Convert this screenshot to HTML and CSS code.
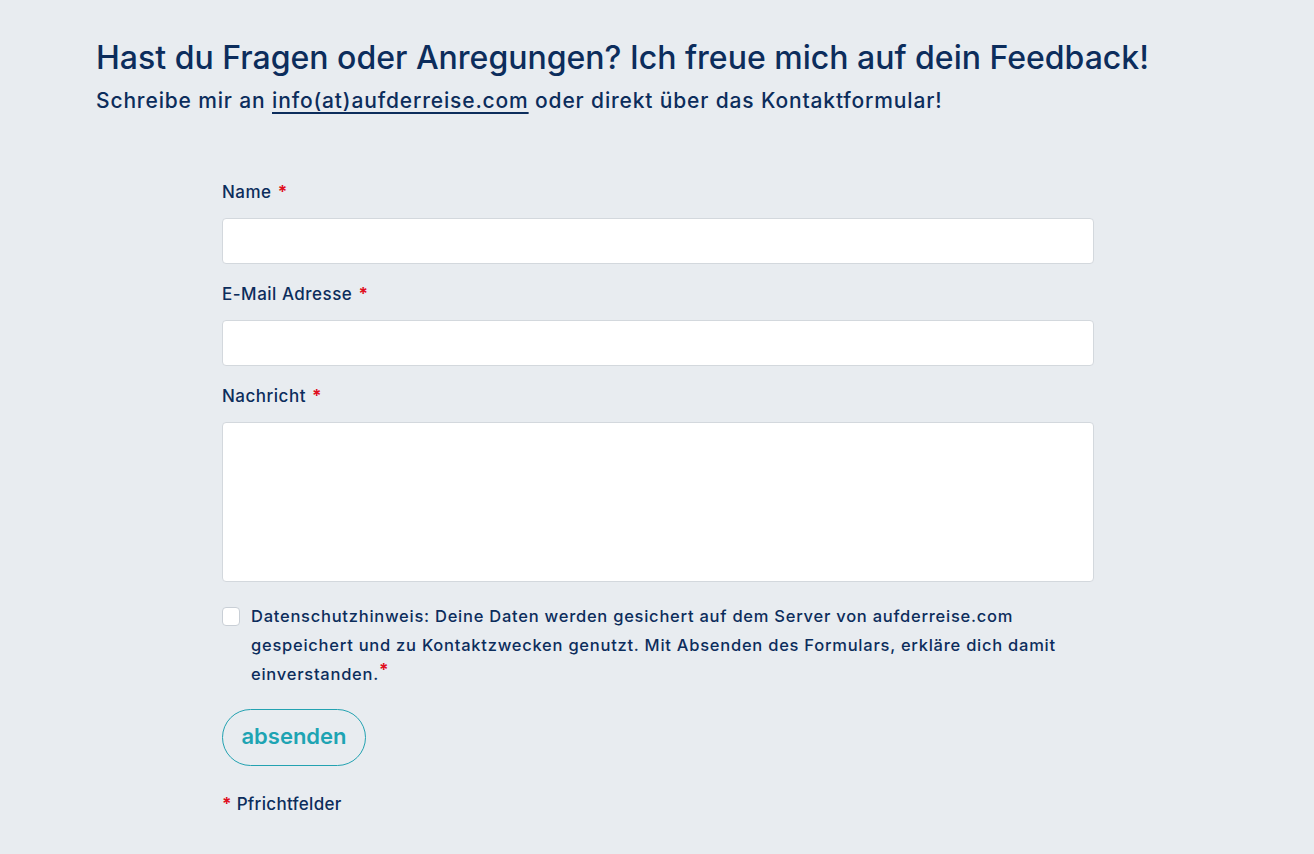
FILE: index.html
```html
<!DOCTYPE html>
<html lang="de">
<head>
<meta charset="utf-8">
<title>Kontakt</title>
<link rel="stylesheet" href="styles.css">
</head>
<body>
<main class="page">
  <header class="intro">
    <h1 class="title">Hast du Fragen oder Anregungen? Ich freue mich auf dein Feedback!</h1>
    <p class="subtitle">Schreibe mir an <a class="mail" href="#">info(at)aufderreise.com</a> oder direkt über das Kontaktformular!</p>
  </header>
  <form class="form">
    <div class="field">
      <label class="label">Name <span class="req">*</span></label>
      <input class="input" type="text">
    </div>
    <div class="field">
      <label class="label">E-Mail Adresse <span class="req">*</span></label>
      <input class="input" type="email">
    </div>
    <div class="field">
      <label class="label">Nachricht <span class="req">*</span></label>
      <textarea class="textarea"></textarea>
    </div>
    <div class="consent">
      <span class="box"></span>
      <p class="consent-text">Datenschutzhinweis: Deine Daten werden gesichert auf dem Server von aufderreise.com<br>gespeichert und zu Kontaktzwecken genutzt. Mit Absenden des Formulars, erkläre dich damit<br>einverstanden.<span class="req sup">*</span></p>
    </div>
    <button class="send" type="button">absenden</button>
    <p class="note"><span class="req">*</span> Pfrichtfelder</p>
  </form>
</main>
</body>
</html>
```

FILE: styles.css
```css
html, body {
  margin: 0;
  padding: 0;
}
body {
  background: #e8ecf0;
  color: #0c2d5c;
  font-family: "Inter", "Lato", sans-serif;
  width: 1314px;
  height: 854px;
  overflow: hidden;
}
.page {
  padding: 36px 0 0 96px;
}
.title {
  margin: 0;
  font-size: 32px;
  font-weight: 500;
  line-height: 44px;
  letter-spacing: 0;
}
.subtitle {
  margin: 6px 0 0;
  font-size: 21px;
  font-weight: 500;
  line-height: 30px;
  letter-spacing: 0.85px;
}
.mail {
  color: inherit;
  text-decoration: underline;
  text-underline-offset: 4px;
  text-decoration-thickness: 1.5px;
}
.form {
  margin: 64px 0 0 126px;
  width: 872px;
  display: flex;
  flex-direction: column;
}
.field {
  display: flex;
  flex-direction: column;
  margin-bottom: 18px;
}
.label {
  font-size: 17px;
  font-weight: 500;
  line-height: 24px;
  letter-spacing: 0.5px;
  margin-bottom: 14px;
}
.req {
  color: #e0101e;
  font-size: 17px;
  font-weight: 700;
  margin-left: 1px;
}
.sup {
  vertical-align: top;
  margin-left: 0;
  line-height: 20px;
}
.input, .textarea {
  box-sizing: border-box;
  width: 872px;
  height: 46px;
  background: #fff;
  border: 1px solid #d3d8dd;
  border-radius: 4px;
  margin: 0;
  font: inherit;
}
.textarea {
  height: 160px;
  resize: none;
}
.consent {
  display: flex;
  align-items: flex-start;
  gap: 11px;
  margin-top: 2px;
}
.box {
  flex: none;
  width: 18px;
  height: 19px;
  box-sizing: border-box;
  background: #fff;
  border: 1px solid #c9cfd6;
  border-radius: 4px;
  margin-top: 5px;
}
.consent-text {
  margin: 0;
  font-size: 16.5px;
  font-weight: 500;
  line-height: 29px;
  letter-spacing: 0.75px;
}
.send {
  align-self: flex-start;
  margin-top: 20px;
  width: 144px;
  height: 57px;
  border: 1.5px solid #23a2b1;
  border-radius: 29px;
  background: transparent;
  color: #1ea4b3;
  font-family: inherit;
  font-size: 22px;
  font-weight: 600;
  letter-spacing: 0;
  padding: 0 0 3px;
}
.note {
  margin: 26px 0 0;
  font-size: 17px;
  font-weight: 500;
  line-height: 24px;
  letter-spacing: 0.3px;
}
.note .req {
  margin-left: 0;
}
```
